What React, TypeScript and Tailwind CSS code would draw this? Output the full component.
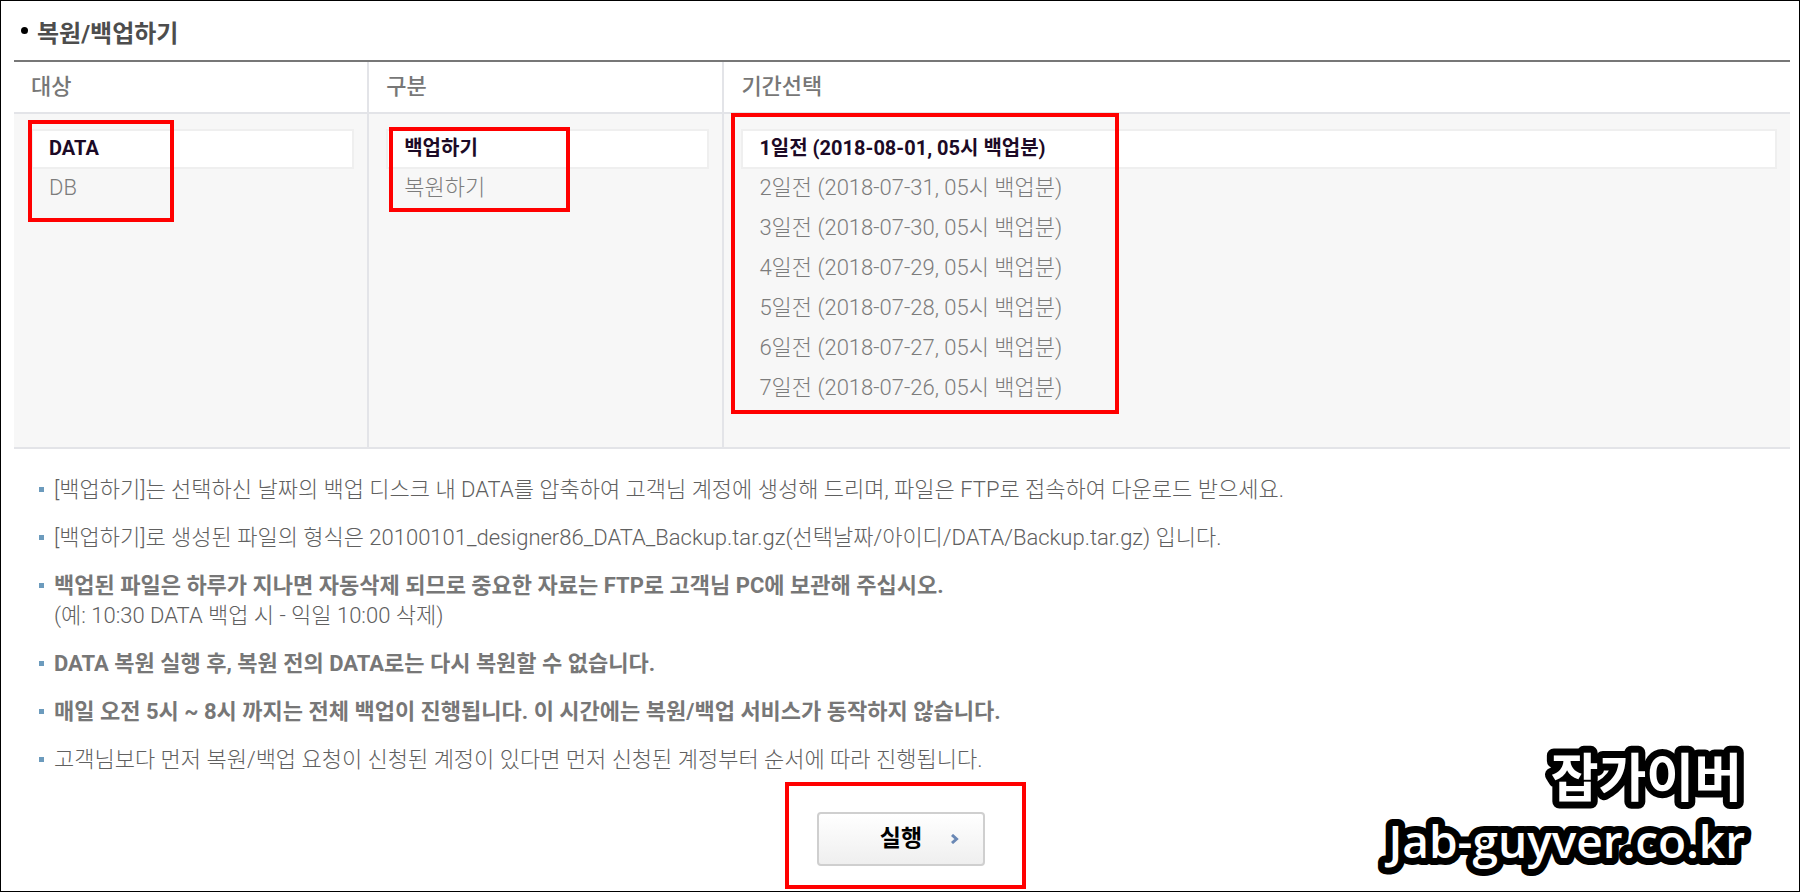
import { useState } from 'react'

interface OptionListProps {
  label: string
  options: string[]
}

interface Note {
  text: string
  bold?: boolean
  sub?: string
}

const targets = ['DATA', 'DB']
const actions = ['백업하기', '복원하기']
const periods = [
  '1일전 (2018-08-01, 05시 백업분)',
  '2일전 (2018-07-31, 05시 백업분)',
  '3일전 (2018-07-30, 05시 백업분)',
  '4일전 (2018-07-29, 05시 백업분)',
  '5일전 (2018-07-28, 05시 백업분)',
  '6일전 (2018-07-27, 05시 백업분)',
  '7일전 (2018-07-26, 05시 백업분)'
]

const notes: Note[] = [
  {
    text: '[백업하기]는 선택하신 날짜의 백업 디스크 내 DATA를 압축하여 고객님 계정에 생성해 드리며, 파일은 FTP로 접속하여 다운로드 받으세요.'
  },
  {
    text: '[백업하기]로 생성된 파일의 형식은 20100101_designer86_DATA_Backup.tar.gz(선택날짜/아이디/DATA/Backup.tar.gz) 입니다.'
  },
  {
    text: '백업된 파일은 하루가 지나면 자동삭제 되므로 중요한 자료는 FTP로 고객님 PC에 보관해 주십시오.',
    bold: true,
    sub: '(예: 10:30 DATA 백업 시 - 익일 10:00 삭제)'
  },
  { text: 'DATA 복원 실행 후, 복원 전의 DATA로는 다시 복원할 수 없습니다.', bold: true },
  {
    text: '매일 오전 5시 ~ 8시 까지는 전체 백업이 진행됩니다. 이 시간에는 복원/백업 서비스가 동작하지 않습니다.',
    bold: true
  },
  { text: '고객님보다 먼저 복원/백업 요청이 신청된 계정이 있다면 먼저 신청된 계정부터 순서에 따라 진행됩니다.' }
]

function OptionList({ label, options }: OptionListProps) {
  const [selected, setSelected] = useState(0)

  return (
    <ul aria-label={label}>
      {options.map((option, index) => (
        <li key={option}>
          <button
            type="button"
            aria-pressed={index === selected}
            onClick={() => setSelected(index)}
            className={
              index === selected
                ? 'block h-10 w-full border-2 border-[#efefef] bg-white px-4 pb-[2px] text-left text-[20px] leading-[30px] font-bold text-[#1c0a26]'
                : 'block h-10 w-full border-2 border-transparent px-4 pb-[2px] text-left text-[22px] leading-[30px] font-light text-[#7c7c7c]'
            }
          >
            {option}
          </button>
        </li>
      ))}
    </ul>
  )
}

function Highlight({ className }: { className: string }) {
  return <div aria-hidden="true" className={`pointer-events-none absolute border-4 border-[#ff0000] ${className}`} />
}

export default function App() {
  return (
    <main className="relative min-h-screen overflow-hidden border border-black bg-white pr-[9px] pl-[13px] font-['Roboto','Noto_Sans_CJK_KR',sans-serif] text-[#777]">
      <h1 className="flex items-center gap-[9px] pt-[15px] pb-[8px] pl-[7px] text-[24px] leading-9 font-bold text-[#4d4d4d]">
        <span className="mb-[7px] size-[7px] rounded-full bg-black" />
        복원/백업하기
      </h1>

      <table className="w-full table-fixed border-separate border-spacing-0 border-t-2 border-[#777] text-left">
        <thead>
          <tr className="h-[52px] text-[22px] leading-[30px]">
            <th className="w-1/5 border-r-2 border-b-2 border-[#e3e4e8] pl-[17px] font-medium">대상</th>
            <th className="w-1/5 border-r-2 border-b-2 border-[#e3e4e8] pl-[17px] font-medium">구분</th>
            <th className="border-b-2 border-[#e3e4e8] pl-[17px] font-medium">기간선택</th>
          </tr>
        </thead>
        <tbody>
          <tr className="bg-[#f7f7f7] align-top">
            <td className="relative border-r-2 border-b-2 border-[#e3e4e8] pt-[15px] pr-[13px] pb-[38px] pl-[17px]">
              <OptionList label="대상" options={targets} />
              <Highlight className="top-[6px] left-[14px] h-[102px] w-[146px]" />
            </td>
            <td className="relative border-r-2 border-b-2 border-[#e3e4e8] pt-[15px] pr-[13px] pb-[38px] pl-[17px]">
              <OptionList label="구분" options={actions} />
              <Highlight className="top-[13px] left-[20px] h-[85px] w-[181px]" />
            </td>
            <td className="relative border-b-2 border-[#e3e4e8] pt-[15px] pr-[13px] pb-[38px] pl-[17px]">
              <OptionList label="기간선택" options={periods} />
              <Highlight className="-top-[1px] left-[7px] h-[301px] w-[388px]" />
            </td>
          </tr>
        </tbody>
      </table>

      <ul className="mt-[26px] space-y-[18px] pl-[25px] text-[22px] leading-[30px]">
        {notes.map((note) => (
          <li key={note.text} className="flex gap-[10px]">
            <span className="mt-[12px] size-[5px] shrink-0 bg-[#6c9bbd]" />
            <div>
              <p className={note.bold ? 'font-bold' : 'font-light text-[#606060]'}>{note.text}</p>
              {note.sub && <p className="font-light text-[#606060]">{note.sub}</p>}
            </div>
          </li>
        ))}
      </ul>

      <div className="mt-[37px] mb-[23px] flex justify-center pr-[2px]">
        <div className="relative">
          <button
            type="button"
            className="grid h-[54px] w-[168px] grid-cols-[1fr_auto_1fr] items-center rounded border-2 border-[#cfcfcf] bg-linear-to-b from-white to-[#efefef] text-[23px] font-bold text-black"
          >
            <span className="col-start-2">실행</span>
            <svg viewBox="0 0 8 10" className="ml-[29px] h-[10px] w-[8px]" fill="none" stroke="#6a88b5" strokeWidth="3">
              <path d="M1 1l4.500 4L1 9" />
            </svg>
          </button>
          <Highlight className="-top-[30px] -left-[32px] h-[107px] w-[241px]" />
        </div>
      </div>

      {/* Site watermark, outlined with rounded joins */}
      <svg
        viewBox="0 0 440 172"
        className="pointer-events-none absolute right-0 bottom-0 h-[172px] w-[440px] font-['Open_Sans','Noto_Sans_CJK_KR',sans-serif]"
        fill="white"
        stroke="black"
        strokeWidth="14"
        strokeLinejoin="round"
        paintOrder="stroke"
        textAnchor="end"
      >
        <text x="383" y="78" className="text-[52px] font-bold">
          잡가이버
        </text>
        <text x="386" y="139" className="text-[46px] font-semibold">
          Jab-guyver.co.kr
        </text>
      </svg>
    </main>
  )
}
